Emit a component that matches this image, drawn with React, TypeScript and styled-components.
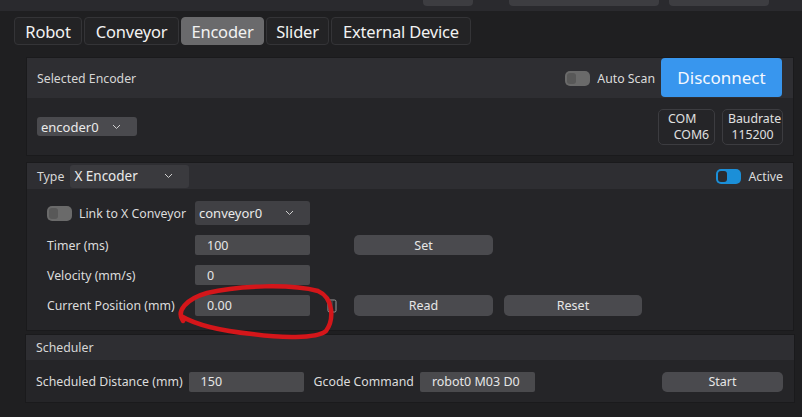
import React from "react";
import styled, { createGlobalStyle } from "styled-components";

const Global = createGlobalStyle`
  html, body { margin: 0; padding: 0; background: #1f1f21; }
  body { font-family: "Noto Sans", "Open Sans", "DejaVu Sans", sans-serif; }
  * { box-sizing: border-box; }
`;

const Page = styled.div`
  position: relative;
  width: 802px;
  height: 417px;
  background: #1f1f21;
  overflow: hidden;
  color: #e4e4e4;
`;

const TopStrip = styled.div`
  height: 11px;
  background: #2a2a2e;
  display: flex;
  align-items: flex-start;
  padding-left: 423px;
`;

const StripButton = styled.div<{ $w: number; $ml: number }>`
  width: ${(p) => p.$w}px;
  margin-left: ${(p) => p.$ml}px;
  height: 6px;
  background: #3d3d41;
  border-radius: 0 0 4px 4px;
`;

const TabBar = styled.div`
  display: flex;
  gap: 2px;
  margin: 6px 0 0 14px;
  height: 28px;
`;

const Tab = styled.div<{ $active?: boolean; $w: number }>`
  display: flex;
  align-items: center;
  justify-content: center;
  width: ${(p) => p.$w}px;
  height: 28px;
  font-size: 16.5px;
  letter-spacing: -0.2px;
  color: #f2f2f2;
  background: ${(p) => (p.$active ? "#6a6a6c" : "#232325")};
  border: 1px solid ${(p) => (p.$active ? "#6a6a6c" : "#343437")};
  border-radius: 4px;
`;

const Panel = styled.div<{ $mt: number; $ml?: number; $w?: number }>`
  margin-top: ${(p) => p.$mt}px;
  margin-left: ${(p) => p.$ml ?? 26}px;
  width: ${(p) => p.$w ?? 768}px;
  background: #252528;
  border: 1px solid #1a1a1c;
  display: flex;
  flex-direction: column;
`;

const PanelHeader = styled.div<{ $h: number; $pl?: number }>`
  height: ${(p) => p.$h}px;
  background: #2e2e32;
  display: flex;
  align-items: center;
  padding-left: ${(p) => p.$pl ?? 10}px;
  font-size: 12.3px;
  color: #d6d6d6;
`;

const Spacer = styled.div`
  flex: 1;
`;

const Toggle = styled.div<{ $on?: boolean }>`
  position: relative;
  width: 25px;
  height: 15px;
  border-radius: 5px;
  background: ${(p) => (p.$on ? "#1b8fd8" : "#6a6a6a")};
  flex-shrink: 0;
  &::after {
    content: "";
    position: absolute;
    top: 2px;
    left: 2px;
    width: 9px;
    height: 11px;
    border-radius: 3px;
    background: ${(p) => (p.$on ? "#2b2b2f" : "#585858")};
  }
`;

const ToggleLabel = styled.span<{ $ml?: number; $mr?: number }>`
  margin-left: ${(p) => p.$ml ?? 7}px;
  margin-right: ${(p) => p.$mr ?? 0}px;
  font-size: 12.3px;
  color: #dcdcdc;
`;

const PrimaryButton = styled.div`
  width: 121px;
  height: 39px;
  margin: 0 11px 0 6px;
  align-self: flex-start;
  background: #3896ee;
  border-radius: 4px;
  display: flex;
  align-items: center;
  justify-content: center;
  font-size: 17px;
  color: #f4f8ff;
`;

const PanelBody = styled.div<{ $h: number }>`
  height: ${(p) => p.$h}px;
  display: flex;
  align-items: center;
  padding: 0 10px 0 10px;
`;

const Dropdown = styled.div<{ $w: number; $h: number; $bg?: string; $ml?: number; $fs?: number }>`
  width: ${(p) => p.$w}px;
  height: ${(p) => p.$h}px;
  margin-left: ${(p) => p.$ml ?? 0}px;
  background: ${(p) => p.$bg ?? "#4a4a4e"};
  border-radius: 3px;
  display: flex;
  align-items: center;
  padding: 0 4px;
  font-size: ${(p) => p.$fs ?? 13}px;
  color: #eaeaea;
  justify-content: space-between;
`;

const Chevron = () => (
  <svg width="9" height="6" viewBox="0 0 9 6" style={{ marginRight: 12 }}>
    <path d="M1 1 L4.5 4.5 L8 1" fill="none" stroke="#cfcfcf" strokeWidth="1" />
  </svg>
);

const InfoBox = styled.div<{ $w: number }>`
  width: ${(p) => p.$w}px;
  height: 36px;
  border: 1px solid #3c3c40;
  border-radius: 5px;
  display: flex;
  flex-direction: column;
  align-items: center;
  justify-content: center;
  font-size: 12.3px;
  line-height: 16px;
  color: #e0e0e0;
  margin-left: 7px;
`;

const FormGrid = styled.div`
  display: grid;
  grid-template-columns: 148px 115px 44px 139px 11px 138px;
  grid-auto-rows: auto;
  row-gap: 10px;
  padding: 12px 0 14px 20px;
  align-items: center;
`;

const LabelCell = styled.div`
  display: flex;
  align-items: center;
  font-size: 12.3px;
  color: #dcdcdc;
`;

const Field = styled.div<{ $h: number; $w?: number }>`
  height: ${(p) => p.$h}px;
  width: ${(p) => (p.$w ? `${p.$w}px` : "auto")};
  background: #4a4a4d;
  border-radius: 2px;
  display: flex;
  align-items: center;
  padding-left: 12px;
  font-size: 12.5px;
  color: #e6e6e6;
`;

const Button = styled.div<{ $h?: number; $w?: number }>`
  height: ${(p) => p.$h ?? 20}px;
  width: ${(p) => (p.$w ? `${p.$w}px` : "auto")};
  background: #4a4a4e;
  border-radius: 5px;
  display: flex;
  align-items: center;
  justify-content: center;
  font-size: 12.5px;
  color: #e6e6e6;
`;

const IconCell = styled.div`
  display: flex;
  align-items: center;
  padding-left: 17px;
`;

const SchedBody = styled.div`
  height: 42px;
  display: flex;
  align-items: center;
  padding: 1px 0 0 10px;
  font-size: 12.3px;
  color: #dcdcdc;
`;

const SchedLabel = styled.span<{ $mr: number; $ml?: number }>`
  margin-right: ${(p) => p.$mr}px;
  margin-left: ${(p) => p.$ml ?? 0}px;
`;

const Annotation = styled.svg`
  position: absolute;
  left: 0;
  top: 0;
  pointer-events: none;
`;

export default function App() {
  return (
    <Page>
      <Global />
      <TopStrip>
        <StripButton $w={50} $ml={0} />
        <StripButton $w={150} $ml={36} />
        <StripButton $w={100} $ml={10} />
      </TopStrip>
      <TabBar>
        <Tab $w={68}>Robot</Tab>
        <Tab $w={95}>Conveyor</Tab>
        <Tab $w={83} $active>Encoder</Tab>
        <Tab $w={63}>Slider</Tab>
        <Tab $w={140}>External Device</Tab>
      </TabBar>

      <Panel $mt={12}>
        <PanelHeader $h={40}>
          Selected Encoder
          <Spacer />
          <Toggle />
          <ToggleLabel $ml={7}>Auto Scan</ToggleLabel>
          <PrimaryButton>Disconnect</PrimaryButton>
        </PanelHeader>
        <PanelBody $h={57}>
          <Dropdown $w={100} $h={19}>
            encoder0
            <Chevron />
          </Dropdown>
          <Spacer />
          <InfoBox $w={57}>
            <span style={{ alignSelf: "flex-start", marginLeft: 9 }}>COM</span>
            <span style={{ marginLeft: 10 }}>COM6</span>
          </InfoBox>
          <InfoBox $w={61}>
            <span style={{ marginLeft: 4 }}>Baudrate</span>
            <span>115200</span>
          </InfoBox>
        </PanelBody>
      </Panel>

      <Panel $mt={6}>
        <PanelHeader $h={26}>
          Type
          <Dropdown $w={119} $h={23} $bg="#3a3a3e" $ml={6} $fs={13.5}>
            X Encoder
            <Chevron />
          </Dropdown>
          <Spacer />
          <Toggle $on />
          <ToggleLabel $ml={7} $mr={10}>Active</ToggleLabel>
        </PanelHeader>
        <FormGrid>
          <LabelCell>
            <Toggle />
            <ToggleLabel $ml={7}>Link to X Conveyor</ToggleLabel>
          </LabelCell>
          <Dropdown $w={115} $h={24} $bg="#404044">
            conveyor0
            <Chevron />
          </Dropdown>
          <div />
          <div />
          <div />
          <div />

          <LabelCell>Timer (ms)</LabelCell>
          <Field $h={20}>100</Field>
          <div />
          <Button>Set</Button>
          <div />
          <div />

          <LabelCell>Velocity (mm/s)</LabelCell>
          <Field $h={20}>0</Field>
          <div />
          <div />
          <div />
          <div />

          <LabelCell>Current Position (mm)</LabelCell>
          <Field $h={21}>0.00</Field>
          <IconCell>
            <svg width="10" height="14" viewBox="0 0 10 14">
              <rect x="1" y="1" width="8" height="12" rx="1.5" fill="none" stroke="#9a9a9a" strokeWidth="1" />
              <line x1="5" y1="1" x2="5" y2="13" stroke="#5a5a5a" strokeWidth="1" />
            </svg>
          </IconCell>
          <Button $h={21}>Read</Button>
          <div />
          <Button $h={21}>Reset</Button>
        </FormGrid>
      </Panel>

      <Panel $mt={3} $ml={25} $w={770}>
        <PanelHeader $h={25}>Scheduler</PanelHeader>
        <SchedBody>
          <SchedLabel $mr={6}>Scheduled Distance (mm)</SchedLabel>
          <Field $h={20} $w={115}>150</Field>
          <SchedLabel $mr={6} $ml={10}>Gcode Command</SchedLabel>
          <Field $h={20} $w={115}>robot0 M03 D0</Field>
          <Spacer />
          <Button $w={121} $h={20} style={{ marginRight: 11 }}>Start</Button>
        </SchedBody>
      </Panel>

      <Annotation width="802" height="417" viewBox="0 0 802 417">
        <path
          d="M 183 321 C 176 311, 186 299, 207 293 C 240 285, 292 284, 318 291 C 334 298, 334 320, 326 331 C 316 339, 280 338, 252 334 C 222 331, 198 326, 181 316"
          fill="none"
          stroke="#d4161a"
          strokeWidth="4.5"
          strokeLinecap="round"
        />
      </Annotation>
    </Page>
  );
}
